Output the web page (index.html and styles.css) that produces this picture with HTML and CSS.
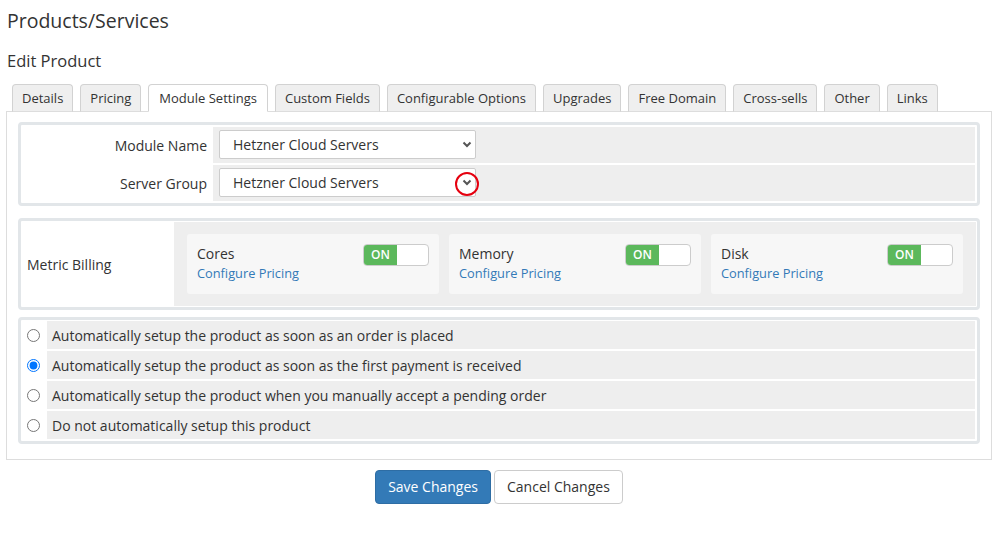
FILE: index.html
```html
<!DOCTYPE html>
<html lang="en">
<head>
<meta charset="utf-8">
<title>Products/Services</title>
<link rel="stylesheet" href="styles.css">
</head>
<body>
<div class="page">
  <h1 class="title">Products/Services</h1>
  <h2 class="subtitle">Edit Product</h2>
  <ul class="tabs">
    <li class="tab">Details</li>
    <li class="tab">Pricing</li>
    <li class="tab active">Module Settings</li>
    <li class="tab">Custom Fields</li>
    <li class="tab">Configurable Options</li>
    <li class="tab">Upgrades</li>
    <li class="tab">Free Domain</li>
    <li class="tab">Cross-sells</li>
    <li class="tab">Other</li>
    <li class="tab">Links</li>
  </ul>
  <div class="panel">
    <div class="box module-box">
      <div class="mrow">
        <div class="mlabel">Module Name</div>
        <div class="mfield">
          <div class="select">
            <span>Hetzner Cloud Servers</span>
            <svg class="chev" width="10" height="7" viewBox="0 0 10 7"><path d="M1.5 1.5 L5 5 L8.5 1.5" fill="none" stroke="#555" stroke-width="2"/></svg>
          </div>
        </div>
      </div>
      <div class="mrow">
        <div class="mlabel">Server Group</div>
        <div class="mfield">
          <div class="select">
            <span>Hetzner Cloud Servers</span>
            <svg class="chev" width="10" height="7" viewBox="0 0 10 7"><path d="M1.5 1.5 L5 5 L8.5 1.5" fill="none" stroke="#555" stroke-width="2"/></svg>
            <span class="mark"></span>
          </div>
        </div>
      </div>
    </div>

    <div class="box metric-box">
      <div class="metric-label">Metric Billing</div>
      <div class="metric-cells">
        <div class="card">
          <div class="card-top">
            <span class="card-name">Cores</span>
            <span class="toggle"><span class="toggle-on">ON</span></span>
          </div>
          <a class="link">Configure Pricing</a>
        </div>
        <div class="card">
          <div class="card-top">
            <span class="card-name">Memory</span>
            <span class="toggle"><span class="toggle-on">ON</span></span>
          </div>
          <a class="link">Configure Pricing</a>
        </div>
        <div class="card">
          <div class="card-top">
            <span class="card-name">Disk</span>
            <span class="toggle"><span class="toggle-on">ON</span></span>
          </div>
          <a class="link">Configure Pricing</a>
        </div>
      </div>
    </div>

    <div class="box radio-box">
      <label class="rrow"><span class="rcell"><input type="radio" name="setup"></span><span class="rtext">Automatically setup the product as soon as an order is placed</span></label>
      <label class="rrow"><span class="rcell"><input type="radio" name="setup" checked></span><span class="rtext">Automatically setup the product as soon as the first payment is received</span></label>
      <label class="rrow"><span class="rcell"><input type="radio" name="setup"></span><span class="rtext">Automatically setup the product when you manually accept a pending order</span></label>
      <label class="rrow"><span class="rcell"><input type="radio" name="setup"></span><span class="rtext">Do not automatically setup this product</span></label>
    </div>
  </div>
  <div class="actions">
    <button class="btn btn-primary">Save Changes</button>
    <button class="btn btn-default">Cancel Changes</button>
  </div>
</div>
</body>
</html>
```

FILE: styles.css
```css
* { box-sizing: border-box; }
html, body { margin: 0; padding: 0; background: #fff; }
body {
  font-family: "Open Sans", "DejaVu Sans", sans-serif;
  color: #333;
  font-size: 14px;
}
.page { padding: 0 6px; }

.title {
  margin: 0;
  padding-top: 8px;
  font-size: 19.5px;
  line-height: 25px;
  font-weight: 400;
  color: #333;
  padding-left: 1px;
}
.subtitle {
  margin: 17px 0 0;
  font-size: 16.5px;
  line-height: 22px;
  font-weight: 400;
  color: #333;
  padding-left: 1px;
}

.tabs {
  list-style: none;
  margin: 12px 0 0;
  padding: 0 0 0 6px;
  display: flex;
  gap: 7px;
}
.tab {
  font-size: 13px;
  line-height: 19px;
  padding: 4px 9px 3px;
  background: #efefef;
  border: 1px solid #d2d2d2;
  border-bottom-color: #ddd;
  border-radius: 4px 4px 0 0;
  color: #333;
  margin-bottom: -1px;
}
.tab.active {
  background: #fff;
  border-bottom-color: #fff;
  position: relative;
  z-index: 1;
  padding: 4px 10px 3px;
}

.panel {
  border: 1px solid #ddd;
  padding: 10px 11px 15px;
}

.box {
  border: 3px solid #e2e6e9;
  border-radius: 4px;
  background: #fff;
}

/* module box */
.module-box {
  padding: 2px;
  display: flex;
  flex-direction: column;
  gap: 2px;
}
.mrow {
  display: grid;
  grid-template-columns: 190px 1fr;
  height: 36px;
}
.mlabel {
  display: flex;
  align-items: center;
  justify-content: flex-end;
  padding-right: 6px;
  font-size: 14px;
}
.mfield {
  background: #eee;
  padding: 3px 0 0 6px;
}
.select {
  position: relative;
  width: 257px;
  height: 29px;
  border: 1px solid #ccc;
  border-radius: 2px;
  background: #fff;
  display: flex;
  align-items: center;
  justify-content: space-between;
  padding: 0 3px 0 13px;
  font-size: 14px;
  color: #333;
}
.chev { display: block; }
.mark {
  position: absolute;
  left: 235px;
  top: 3px;
  width: 24px;
  height: 24px;
  border: 2px solid #e5000f;
  border-radius: 50%;
}

/* metric box */
.metric-box {
  margin-top: 12px;
  padding: 1px;
  display: grid;
  grid-template-columns: 152px 1fr;
}
.metric-label {
  display: flex;
  align-items: center;
  padding-left: 5px;
  font-size: 14px;
}
.metric-cells {
  background: #eee;
  padding: 12px 13px;
  display: grid;
  grid-template-columns: repeat(3, 1fr);
  gap: 10px;
}
.card {
  background: #f7f7f7;
  border-radius: 3px;
  padding: 10px 10px 11px;
  height: 60px;
}
.card-top {
  display: flex;
  justify-content: space-between;
  align-items: flex-start;
  height: 20px;
}
.card-name {
  font-size: 14px;
  line-height: 20px;
}
.toggle {
  width: 66px;
  height: 22px;
  border: 1px solid #ccc;
  border-radius: 4px;
  background: #fff;
  overflow: hidden;
  display: flex;
}
.toggle-on {
  width: 33px;
  background: #5cb85c;
  color: #fff;
  font-size: 12px;
  font-weight: 600;
  line-height: 20px;
  text-align: center;
}
.link {
  display: block;
  font-size: 12.8px;
  line-height: 19px;
  color: #337ab7;
  text-decoration: none;
}

/* radio box */
.radio-box {
  margin-top: 7px;
  padding: 1px 2px 2px;
  display: flex;
  flex-direction: column;
  gap: 2px;
}
.rrow {
  display: grid;
  grid-template-columns: 24px 1fr;
  height: 28px;
}
.rcell {
  display: flex;
  align-items: center;
  padding-left: 4px;
}
.rcell input {
  margin: 0;
  width: 13px;
  height: 13px;
}
.rtext {
  background: #eee;
  display: flex;
  align-items: center;
  padding-left: 5px;
  font-size: 14px;
}

.actions {
  margin-top: 10px;
  display: flex;
  justify-content: center;
  gap: 3px;
}
.btn {
  font-family: "Open Sans", "DejaVu Sans", sans-serif;
  font-size: 14px;
  line-height: 20px;
  padding: 6px 12px;
  border-radius: 4px;
  border: 1px solid #ccc;
  cursor: pointer;
}
.btn-primary {
  background: #337ab7;
  border-color: #2e6da4;
  color: #fff;
}
.btn-default {
  background: #fff;
  color: #333;
}
```
